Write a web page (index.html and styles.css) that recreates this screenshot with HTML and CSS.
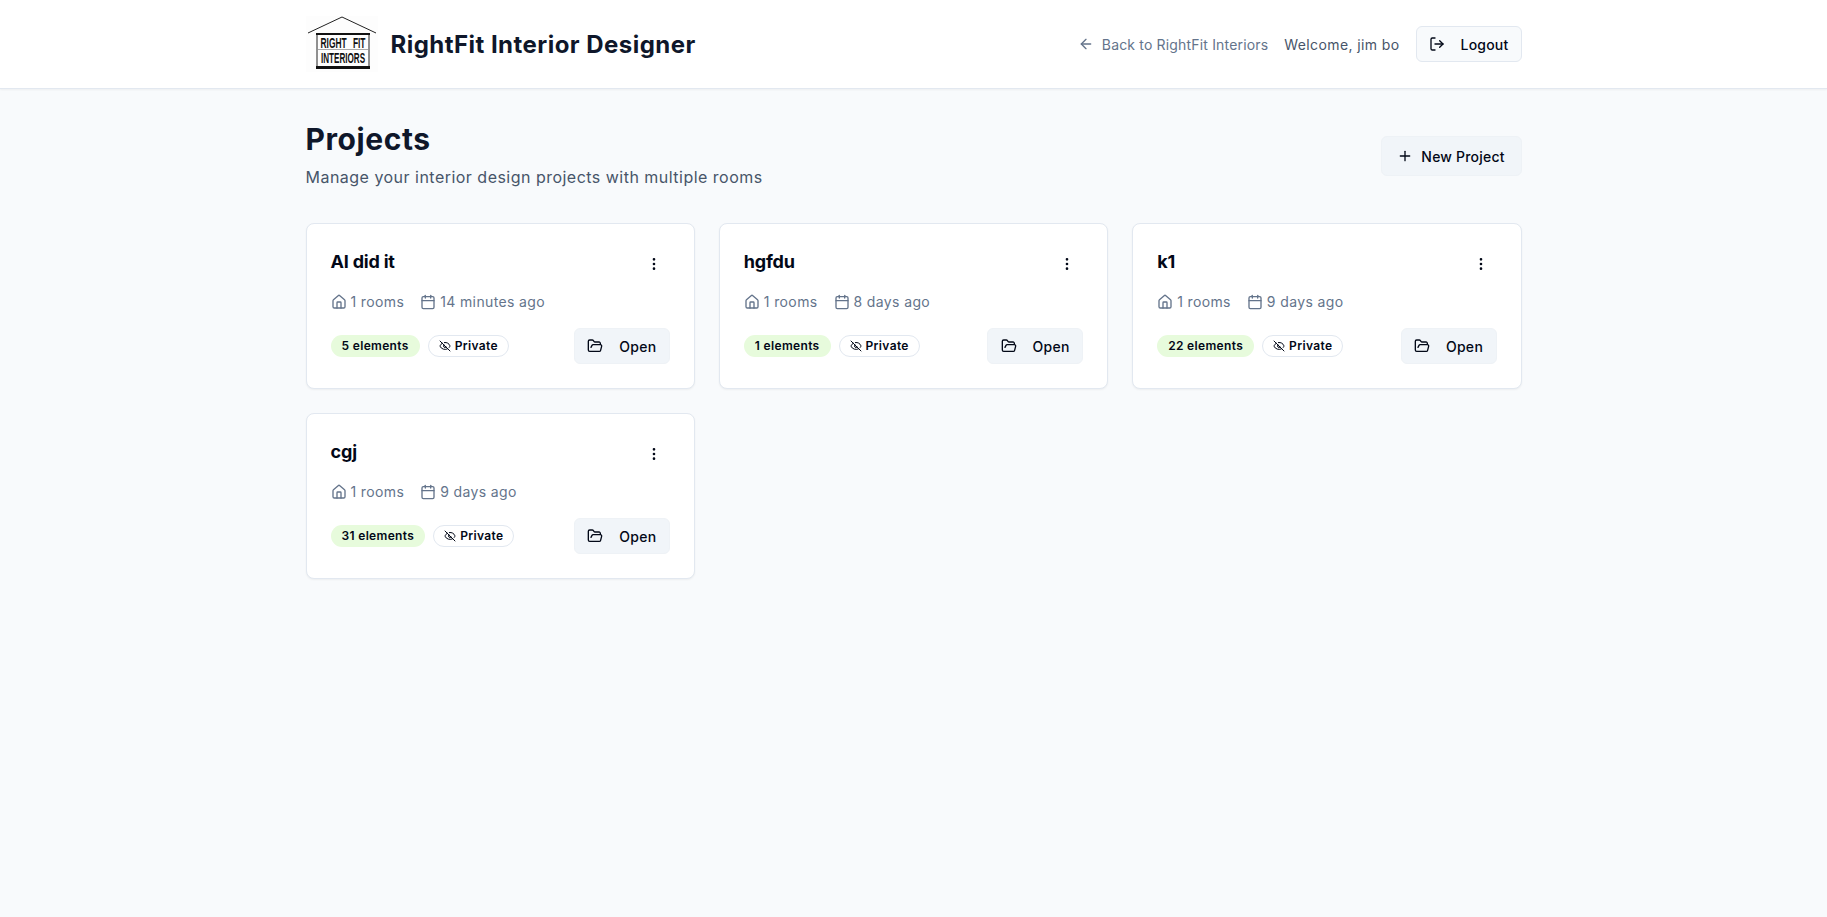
FILE: index.html
```html
<!DOCTYPE html>
<html lang="en">
<head>
  <meta charset="UTF-8" />
  <meta name="viewport" content="width=device-width, initial-scale=1.0"/>
  <title>RightFit Interior Designer</title>
  <link rel="stylesheet" href="styles.css">
</head>
<body>
  <svg class="sprite" xmlns="http://www.w3.org/2000/svg">
    <symbol id="i-back" viewBox="0 0 24 24"><path d="m12 19-7-7 7-7"/><path d="M19 12H5"/></symbol>
    <symbol id="i-logout" viewBox="0 0 24 24"><path d="m16 17 5-5-5-5"/><path d="M21 12H9"/><path d="M9 21H5a2 2 0 0 1-2-2V5a2 2 0 0 1 2-2h4"/></symbol>
    <symbol id="i-plus" viewBox="0 0 24 24"><path d="M5 12h14"/><path d="M12 5v14"/></symbol>
    <symbol id="i-more" viewBox="0 0 24 24"><circle cx="12" cy="12" r="1"/><circle cx="12" cy="5" r="1"/><circle cx="12" cy="19" r="1"/></symbol>
    <symbol id="i-home" viewBox="0 0 24 24"><path d="M15 21v-8a1 1 0 0 0-1-1h-4a1 1 0 0 0-1 1v8"/><path d="M3 10a2 2 0 0 1 .709-1.528l7-5.999a2 2 0 0 1 2.582 0l7 5.999A2 2 0 0 1 21 10v9a2 2 0 0 1-2 2H5a2 2 0 0 1-2-2z"/></symbol>
    <symbol id="i-date" viewBox="0 0 24 24"><path d="M8 2v4"/><path d="M16 2v4"/><rect x="3" y="4" width="18" height="18" rx="2"/><path d="M3 10h18"/></symbol>
    <symbol id="i-hidden" viewBox="0 0 24 24"><path d="M10.733 5.076a10.744 10.744 0 0 1 11.205 6.575 1 1 0 0 1 0 .696 10.747 10.747 0 0 1-1.444 2.49"/><path d="M14.084 14.158a3 3 0 0 1-4.242-4.242"/><path d="M17.479 17.499a10.75 10.75 0 0 1-15.417-5.151 1 1 0 0 1 0-.696 10.75 10.75 0 0 1 4.446-5.143"/><path d="m2 2 20 20"/></symbol>
    <symbol id="i-folder" viewBox="0 0 24 24"><path d="m6 14 1.5-2.9A2 2 0 0 1 9.24 10H20a2 2 0 0 1 1.94 2.5l-1.54 6a2 2 0 0 1-1.95 1.5H4a2 2 0 0 1-2-2V5a2 2 0 0 1 2-2h3.9a2 2 0 0 1 1.69.9l.81 1.2a2 2 0 0 0 1.67.9H18a2 2 0 0 1 2 2v2"/></symbol>
  </svg>

  <header class="topbar">
    <div class="wrap topbar-inner">
      <div class="brand">
        <svg class="logo" viewBox="0 0 72 56" xmlns="http://www.w3.org/2000/svg">
          <path class="logo-roof" d="M2 17 36 1 70 17"/>
          <rect x="10" y="17" width="54" height="2"/>
          <rect x="10" y="50" width="54" height="3"/>
          <path class="logo-wall" d="M11 19v31M63 19v31"/>
          <path class="logo-rule" d="M12 33.500h50"/>
          <text transform="translate(37 32) scale(.56 1)" text-anchor="middle">RIGHT<tspan dx="7"> FIT</tspan></text>
          <text transform="translate(37 47) scale(.54 1)" text-anchor="middle">INTERIORS</text>
        </svg>
        <span class="brand-name">RightFit Interior Designer</span>
      </div>
      <nav class="topnav">
        <a class="back-link" href="#"><svg class="icon"><use href="#i-back"/></svg>Back to RightFit Interiors</a>
        <span class="welcome">Welcome, jim bo</span>
        <button class="btn btn-outline"><svg class="icon"><use href="#i-logout"/></svg>Logout</button>
      </nav>
    </div>
  </header>

  <main class="wrap content">
    <div class="page-head">
      <div>
        <h1>Projects</h1>
        <p class="subtitle">Manage your interior design projects with multiple rooms</p>
      </div>
      <button class="btn btn-new"><svg class="icon"><use href="#i-plus"/></svg>New Project</button>
    </div>

    <div class="grid">
      <article class="card">
        <div class="card-top">
          <h2>AI did it</h2>
          <svg class="icon more"><use href="#i-more"/></svg>
        </div>
        <div class="meta">
          <span class="meta-item"><svg class="icon"><use href="#i-home"/></svg>1 rooms</span>
          <span class="meta-item"><svg class="icon"><use href="#i-date"/></svg>14 minutes ago</span>
        </div>
        <div class="card-foot">
          <div class="badges">
            <span class="badge badge-green">5 elements</span>
            <span class="badge badge-line"><svg class="icon"><use href="#i-hidden"/></svg>Private</span>
          </div>
          <button class="btn btn-open"><svg class="icon"><use href="#i-folder"/></svg>Open</button>
        </div>
      </article>

      <article class="card">
        <div class="card-top">
          <h2>hgfdu</h2>
          <svg class="icon more"><use href="#i-more"/></svg>
        </div>
        <div class="meta">
          <span class="meta-item"><svg class="icon"><use href="#i-home"/></svg>1 rooms</span>
          <span class="meta-item"><svg class="icon"><use href="#i-date"/></svg>8 days ago</span>
        </div>
        <div class="card-foot">
          <div class="badges">
            <span class="badge badge-green">1 elements</span>
            <span class="badge badge-line"><svg class="icon"><use href="#i-hidden"/></svg>Private</span>
          </div>
          <button class="btn btn-open"><svg class="icon"><use href="#i-folder"/></svg>Open</button>
        </div>
      </article>

      <article class="card">
        <div class="card-top">
          <h2>k1</h2>
          <svg class="icon more"><use href="#i-more"/></svg>
        </div>
        <div class="meta">
          <span class="meta-item"><svg class="icon"><use href="#i-home"/></svg>1 rooms</span>
          <span class="meta-item"><svg class="icon"><use href="#i-date"/></svg>9 days ago</span>
        </div>
        <div class="card-foot">
          <div class="badges">
            <span class="badge badge-green">22 elements</span>
            <span class="badge badge-line"><svg class="icon"><use href="#i-hidden"/></svg>Private</span>
          </div>
          <button class="btn btn-open"><svg class="icon"><use href="#i-folder"/></svg>Open</button>
        </div>
      </article>

      <article class="card">
        <div class="card-top">
          <h2>cgj</h2>
          <svg class="icon more"><use href="#i-more"/></svg>
        </div>
        <div class="meta">
          <span class="meta-item"><svg class="icon"><use href="#i-home"/></svg>1 rooms</span>
          <span class="meta-item"><svg class="icon"><use href="#i-date"/></svg>9 days ago</span>
        </div>
        <div class="card-foot">
          <div class="badges">
            <span class="badge badge-green">31 elements</span>
            <span class="badge badge-line"><svg class="icon"><use href="#i-hidden"/></svg>Private</span>
          </div>
          <button class="btn btn-open"><svg class="icon"><use href="#i-folder"/></svg>Open</button>
        </div>
      </article>
    </div>
  </main>
</body>
</html>
```

FILE: styles.css
```css
* {
  box-sizing: border-box;
}
body {
  margin: 0;
  min-height: 917px;
  background: #f8fafc;
  color: #0f172a;
  font-family: Inter, "Noto Sans", sans-serif;
}
.sprite {
  display: none;
}
.icon {
  width: 16px;
  height: 16px;
  flex: none;
  fill: none;
  stroke: currentColor;
  stroke-width: 2;
  stroke-linecap: round;
  stroke-linejoin: round;
}
.wrap {
  width: 1216px;
  margin: 0 auto;
}

/* top bar */
.topbar {
  height: 89px;
  background: #fff;
  border-bottom: 1px solid #e2e8f0;
  box-shadow: 0 1px 2px rgba(0, 0, 0, 0.05);
}
.topbar-inner {
  height: 88px;
  display: flex;
  align-items: center;
  justify-content: space-between;
}
.brand {
  display: flex;
  align-items: center;
  gap: 12px;
}
.logo {
  width: 72px;
  height: 56px;
  background: #fdfdfd;
  fill: #111;
}
.logo text {
  font-family: "Liberation Sans", sans-serif;
  font-size: 15px;
  font-weight: 700;
}
.logo-roof,
.logo-wall {
  fill: none;
  stroke: #222;
  stroke-width: 1;
}
.logo-rule {
  fill: none;
  stroke: #aaa;
  stroke-width: 1;
}
.brand-name {
  margin-left: 1px;
  font-size: 24px;
  font-weight: 700;
  letter-spacing: 0.46px;
}
.topnav {
  display: flex;
  align-items: center;
  gap: 16px;
  font-size: 14px;
}
.back-link {
  display: flex;
  align-items: center;
  gap: 8px;
  color: #64748b;
  text-decoration: none;
  letter-spacing: 0.17px;
}
.welcome {
  color: #475569;
  letter-spacing: 0.39px;
}

/* buttons */
.btn {
  display: inline-flex;
  align-items: center;
  justify-content: center;
  gap: 16px;
  height: 36px;
  padding: 0 12px;
  border: 1px solid #e2e8f0;
  border-radius: 6px;
  background: #f8fafc;
  color: #020817;
  font-family: inherit;
  font-size: 14px;
  font-weight: 500;
  letter-spacing: 0.2px;
}
.btn-outline {
  width: 106px;
}
.btn-new {
  width: 141px;
  height: 40px;
  margin-top: 2px;
  gap: 8px;
  background: #f1f5f9;
  border-color: #eef2f6;
}
.btn-open {
  width: 96px;
  background: #f1f5f9;
  border-color: #eef2f6;
  letter-spacing: 0.3px;
}

/* page heading */
.content {
  padding-top: 32px;
}
.page-head {
  display: flex;
  align-items: center;
  justify-content: space-between;
  margin-bottom: 34px;
}
h1 {
  margin: 0;
  font-size: 30px;
  line-height: 36px;
  font-weight: 700;
  letter-spacing: 0.58px;
}
.subtitle {
  margin: 8px 0 0;
  font-size: 16px;
  line-height: 24px;
  color: #475569;
  letter-spacing: 0.48px;
}

/* project cards */
.grid {
  display: grid;
  grid-template-columns: repeat(3, 1fr);
  gap: 24px;
}
.card {
  height: 166px;
  padding: 24px;
  background: #fff;
  border: 1px solid #e2e8f0;
  border-radius: 8px;
  box-shadow: 0 1px 2px rgba(0, 0, 0, 0.05);
}
.card-top {
  display: flex;
  align-items: center;
  justify-content: space-between;
  height: 28px;
}
h2 {
  margin: 0;
  color: #020817;
  font-size: 18px;
  line-height: 28px;
  font-weight: 700;
  letter-spacing: -0.2px;
}
.more {
  margin-right: 8px;
  margin-top: 4px;
  color: #020817;
}
.meta {
  display: flex;
  gap: 16px;
  margin-top: 16px;
  font-size: 14px;
  line-height: 20px;
  color: #64748b;
  letter-spacing: 0.37px;
}
.meta-item {
  display: flex;
  align-items: center;
  gap: 4px;
}
.card-foot {
  display: flex;
  align-items: center;
  justify-content: space-between;
  margin-top: 16px;
}
.badges {
  display: flex;
  gap: 8px;
  margin-top: -1px;
}
.badge {
  display: inline-flex;
  align-items: center;
  gap: 4px;
  height: 22px;
  padding: 0 10px;
  border: 1px solid transparent;
  border-radius: 11px;
  color: #020817;
  font-size: 12px;
  font-weight: 600;
}
.badge-green {
  background: #e7fbdc;
  letter-spacing: 0.33px;
}
.badge-line {
  background: #fff;
  border-color: #e2e8f0;
  letter-spacing: 0.35px;
}
.badge-line .icon {
  width: 12px;
  height: 12px;
}
```
